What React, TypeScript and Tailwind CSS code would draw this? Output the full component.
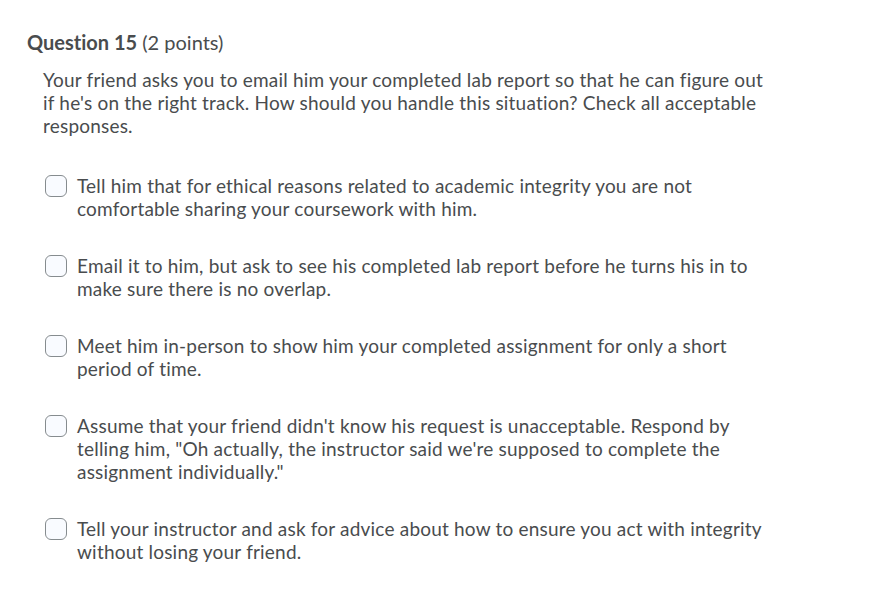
const options = [
  "Tell him that for ethical reasons related to academic integrity you are not comfortable sharing your coursework with him.",
  "Email it to him, but ask to see his completed lab report before he turns his in to make sure there is no overlap.",
  "Meet him in-person to show him your completed assignment for only a short period of time.",
  "Assume that your friend didn't know his request is unacceptable. Respond by telling him, \"Oh actually, the instructor said we're supposed to complete the assignment individually.\"",
  "Tell your instructor and ask for advice about how to ensure you act with integrity without losing your friend.",
];

const App = () => {
  return (
    <div className="min-h-[610px] w-[885px] bg-white font-['Lato',sans-serif] text-[#494c4e] [font-variant-ligatures:none]">
      <div className="pl-[27px] pt-[30px]">
        <h2 className="text-[20px] leading-[24px]">
          <span className="font-bold">Question 15</span> (2 points)
        </h2>
        <div className="mt-[14px] pl-[16px]">
          <p className="w-[730px] text-[19px] leading-[23px] tracking-[0.2px]">
            Your friend asks you to email him your completed lab report so that he can figure out if he's on the right
            track. How should you handle this situation? Check all acceptable responses.
          </p>
          <div className="mt-[37px] flex flex-col gap-[34px] pl-[2px]">
            {options.map((text) => (
              <label key={text} className="flex items-start gap-[10px]">
                <span className="mt-[1px] h-[22px] w-[22px] shrink-0 rounded-[6px] border border-[#868c8f] bg-[#f9fbff]" />
                <span className="w-[692px] text-[19px] leading-[23px] tracking-[0.2px]">{text}</span>
              </label>
            ))}
          </div>
        </div>
      </div>
    </div>
  );
};

export default App;
